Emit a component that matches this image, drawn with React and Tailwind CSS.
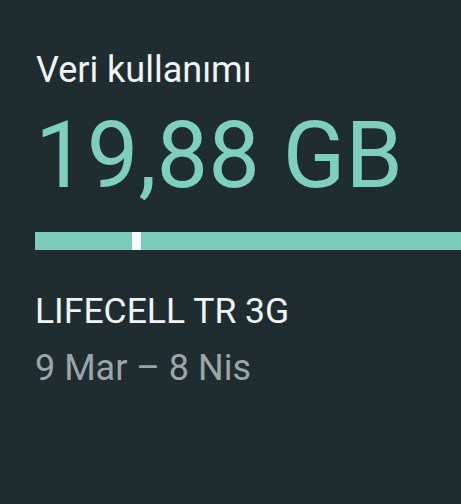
export default function App() {
  return (
    <div className="w-[461px] h-[504px] bg-[#1f2d30] overflow-hidden" style={{ fontFamily: 'Roboto, sans-serif' }}>
      <div className="pl-[36px] pt-[50px]">
        <p className="text-[36px] leading-[40px] text-[#f1f4f4]">Veri kullanımı</p>
        <p className="text-[92px] leading-[100px] text-[#7ecfc0] -ml-[1px] mt-[16px]">19,88 GB</p>
      </div>
      <div className="ml-[35px] mt-[26px] h-[18px] flex">
        <div className="w-[97px] bg-[#7ccbbc]" />
        <div className="w-[9px] bg-[#f4fbf9]" />
        <div className="flex-1 bg-[#7ccbbc]" />
      </div>
      <div className="pl-[35px] pt-[41px]">
        <p className="text-[35.5px] leading-[40px] text-[#f1f4f4]">LIFECELL TR 3G</p>
        <p className="text-[36px] leading-[40px] text-[#9aa6a7] mt-[17px]">9 Mar – 8 Nis</p>
      </div>
    </div>
  )
}
